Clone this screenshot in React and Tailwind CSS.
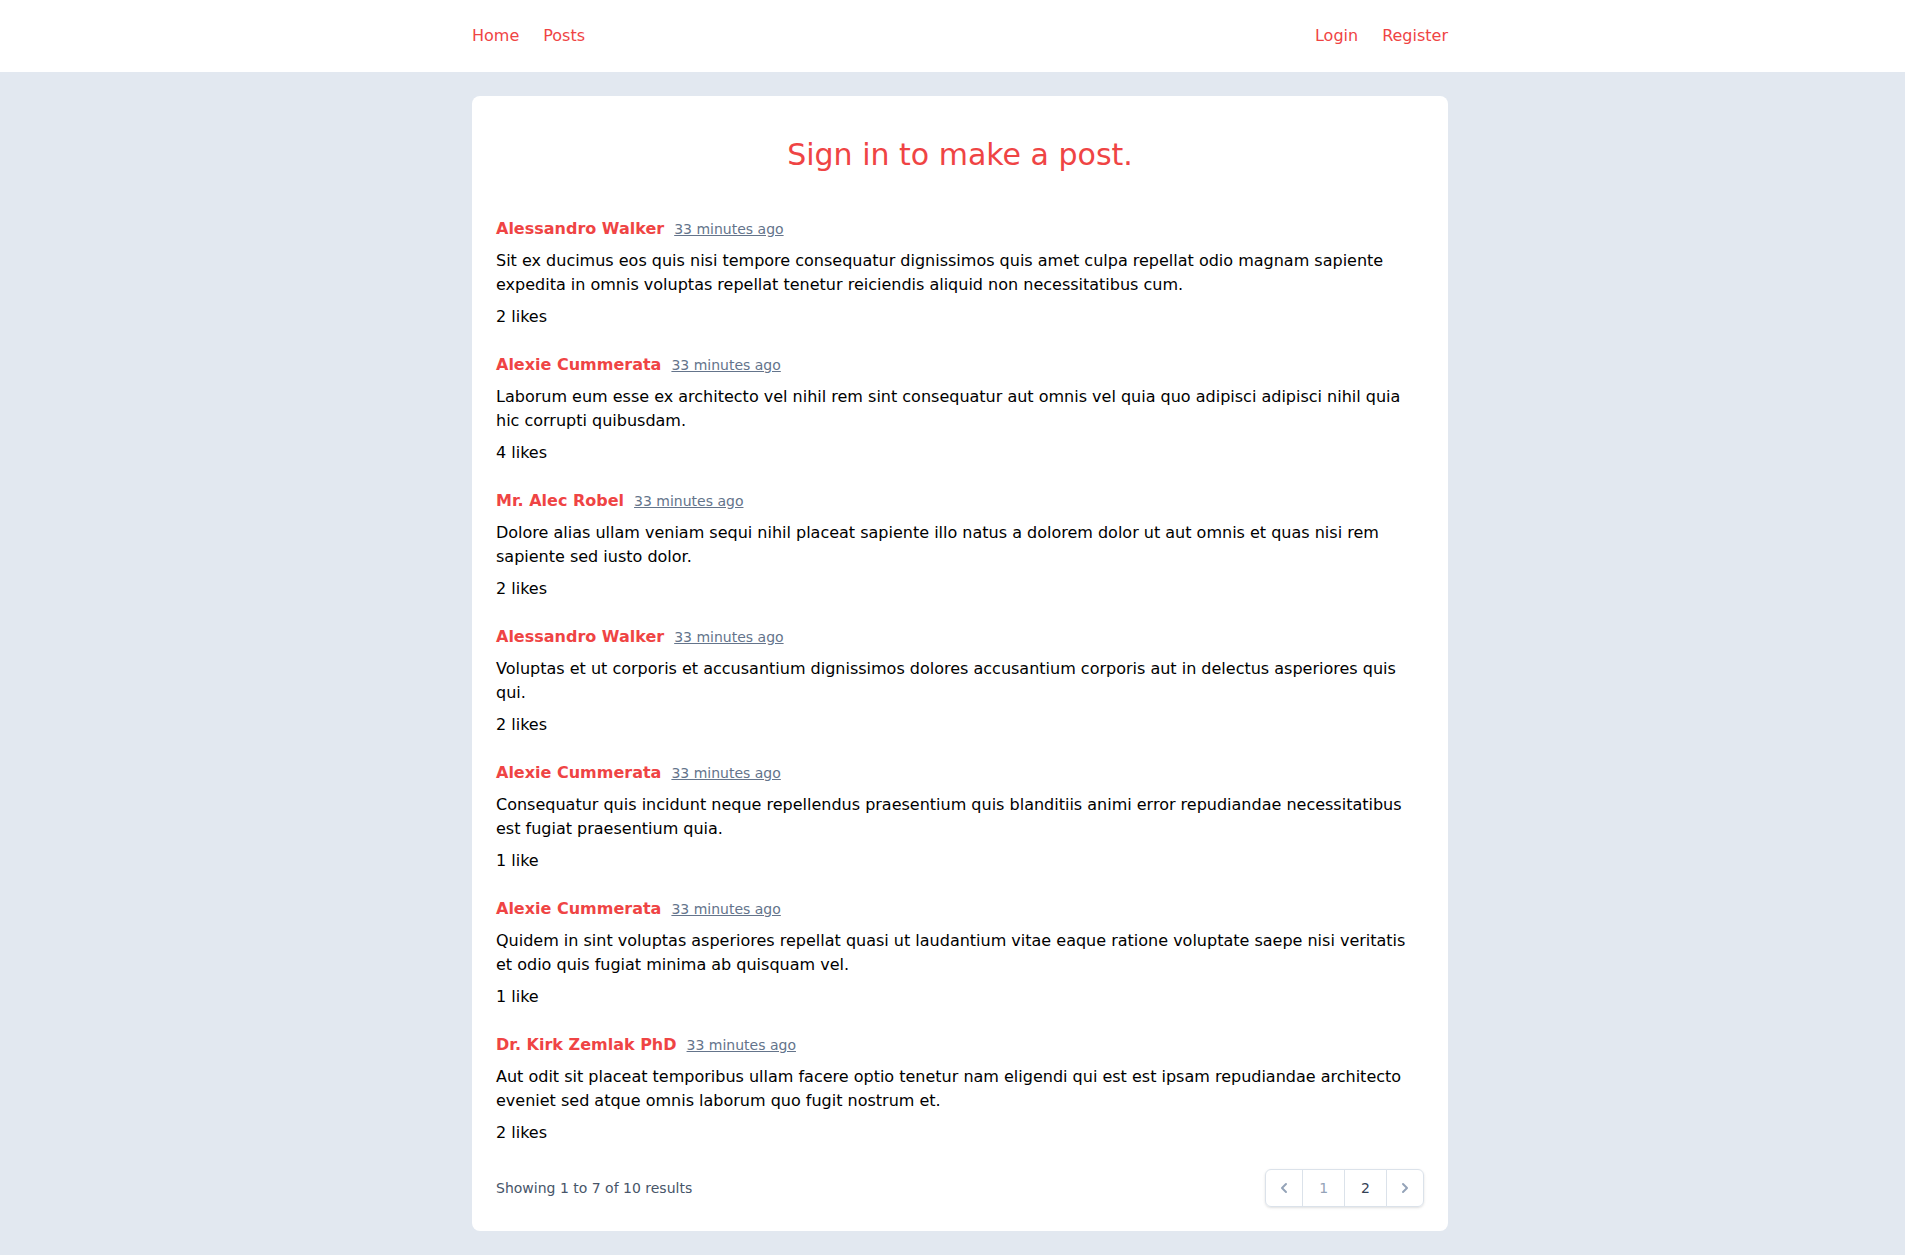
import React from "react";

const posts = [
  {
    name: "Alessandro Walker",
    body: "Sit ex ducimus eos quis nisi tempore consequatur dignissimos quis amet culpa repellat odio magnam sapiente expedita in omnis voluptas repellat tenetur reiciendis aliquid non necessitatibus cum.",
    likes: "2 likes",
  },
  {
    name: "Alexie Cummerata",
    body: "Laborum eum esse ex architecto vel nihil rem sint consequatur aut omnis vel quia quo adipisci adipisci nihil quia hic corrupti quibusdam.",
    likes: "4 likes",
  },
  {
    name: "Mr. Alec Robel",
    body: "Dolore alias ullam veniam sequi nihil placeat sapiente illo natus a dolorem dolor ut aut omnis et quas nisi rem sapiente sed iusto dolor.",
    likes: "2 likes",
  },
  {
    name: "Alessandro Walker",
    body: "Voluptas et ut corporis et accusantium dignissimos dolores accusantium corporis aut in delectus asperiores quis qui.",
    likes: "2 likes",
  },
  {
    name: "Alexie Cummerata",
    body: "Consequatur quis incidunt neque repellendus praesentium quis blanditiis animi error repudiandae necessitatibus est fugiat praesentium quia.",
    likes: "1 like",
  },
  {
    name: "Alexie Cummerata",
    body: "Quidem in sint voluptas asperiores repellat quasi ut laudantium vitae eaque ratione voluptate saepe nisi veritatis et odio quis fugiat minima ab quisquam vel.",
    likes: "1 like",
  },
  {
    name: "Dr. Kirk Zemlak PhD",
    body: "Aut odit sit placeat temporibus ullam facere optio tenetur nam eligendi qui est est ipsam repudiandae architecto eveniet sed atque omnis laborum quo fugit nostrum et.",
    likes: "2 likes",
  },
];

function ChevronLeft() {
  return (
    <svg className="w-5 h-5" viewBox="0 0 20 20" fill="currentColor">
      <path
        fillRule="evenodd"
        d="M12.707 5.293a1 1 0 010 1.414L9.414 10l3.293 3.293a1 1 0 01-1.414 1.414l-4-4a1 1 0 010-1.414l4-4a1 1 0 011.414 0z"
        clipRule="evenodd"
      />
    </svg>
  );
}

function ChevronRight() {
  return (
    <svg className="w-5 h-5" viewBox="0 0 20 20" fill="currentColor">
      <path
        fillRule="evenodd"
        d="M7.293 14.707a1 1 0 010-1.414L10.586 10 7.293 6.707a1 1 0 011.414-1.414l4 4a1 1 0 010 1.414l-4 4a1 1 0 01-1.414 0z"
        clipRule="evenodd"
      />
    </svg>
  );
}

export default function App() {
  return (
    <div className="min-h-screen bg-[#e2e8f0] font-['DejaVu_Sans',sans-serif] text-black">
      <nav className="bg-white h-[72px] pl-[15px]">
        <div className="w-[976px] mx-auto h-full flex items-center justify-between text-base text-[#ef4444]">
          <div className="flex items-center gap-6">
            <a href="#">Home</a>
            <a href="#">Posts</a>
          </div>
          <div className="flex items-center gap-6">
            <a href="#">Login</a>
            <a href="#">Register</a>
          </div>
        </div>
      </nav>
      <main className="pl-[15px] pt-6 pb-6">
        <div className="w-[976px] mx-auto bg-white rounded-lg px-6 pt-[41px] pb-6">
          <h1 className="text-3xl text-center text-[#ef4444]">Sign in to make a post.</h1>
          <div className="mt-11 flex flex-col gap-6">
            {posts.map((p, i) => (
              <div key={i}>
                <div className="leading-6">
                  <a href="#" className="font-bold text-[#ef4444]">{p.name}</a>
                  <span className="ml-2.5 text-sm text-[#64748b] underline">33 minutes ago</span>
                </div>
                <p className="mt-2 leading-6">{p.body}</p>
                <p className="mt-2 leading-6">{p.likes}</p>
              </div>
            ))}
          </div>
          <div className="mt-6 flex items-center justify-between">
            <p className="text-sm text-[#475569]">Showing 1 to 7 of 10 results</p>
            <div className="inline-flex rounded-md shadow-sm">
              <span className="inline-flex items-center px-2 py-2 bg-white border border-[#dbe2ea] rounded-l-md text-[#94a3b8]">
                <ChevronLeft />
              </span>
              <span className="inline-flex items-center px-4 py-2 -ml-px bg-white border border-[#dbe2ea] text-sm leading-5 text-[#94a3b8]">
                1
              </span>
              <a href="#" className="inline-flex items-center px-4 py-2 -ml-px bg-white border border-[#dbe2ea] text-sm leading-5 text-[#334155]">
                2
              </a>
              <a href="#" className="inline-flex items-center px-2 py-2 -ml-px bg-white border border-[#dbe2ea] rounded-r-md text-[#94a3b8]">
                <ChevronRight />
              </a>
            </div>
          </div>
        </div>
      </main>
    </div>
  );
}
